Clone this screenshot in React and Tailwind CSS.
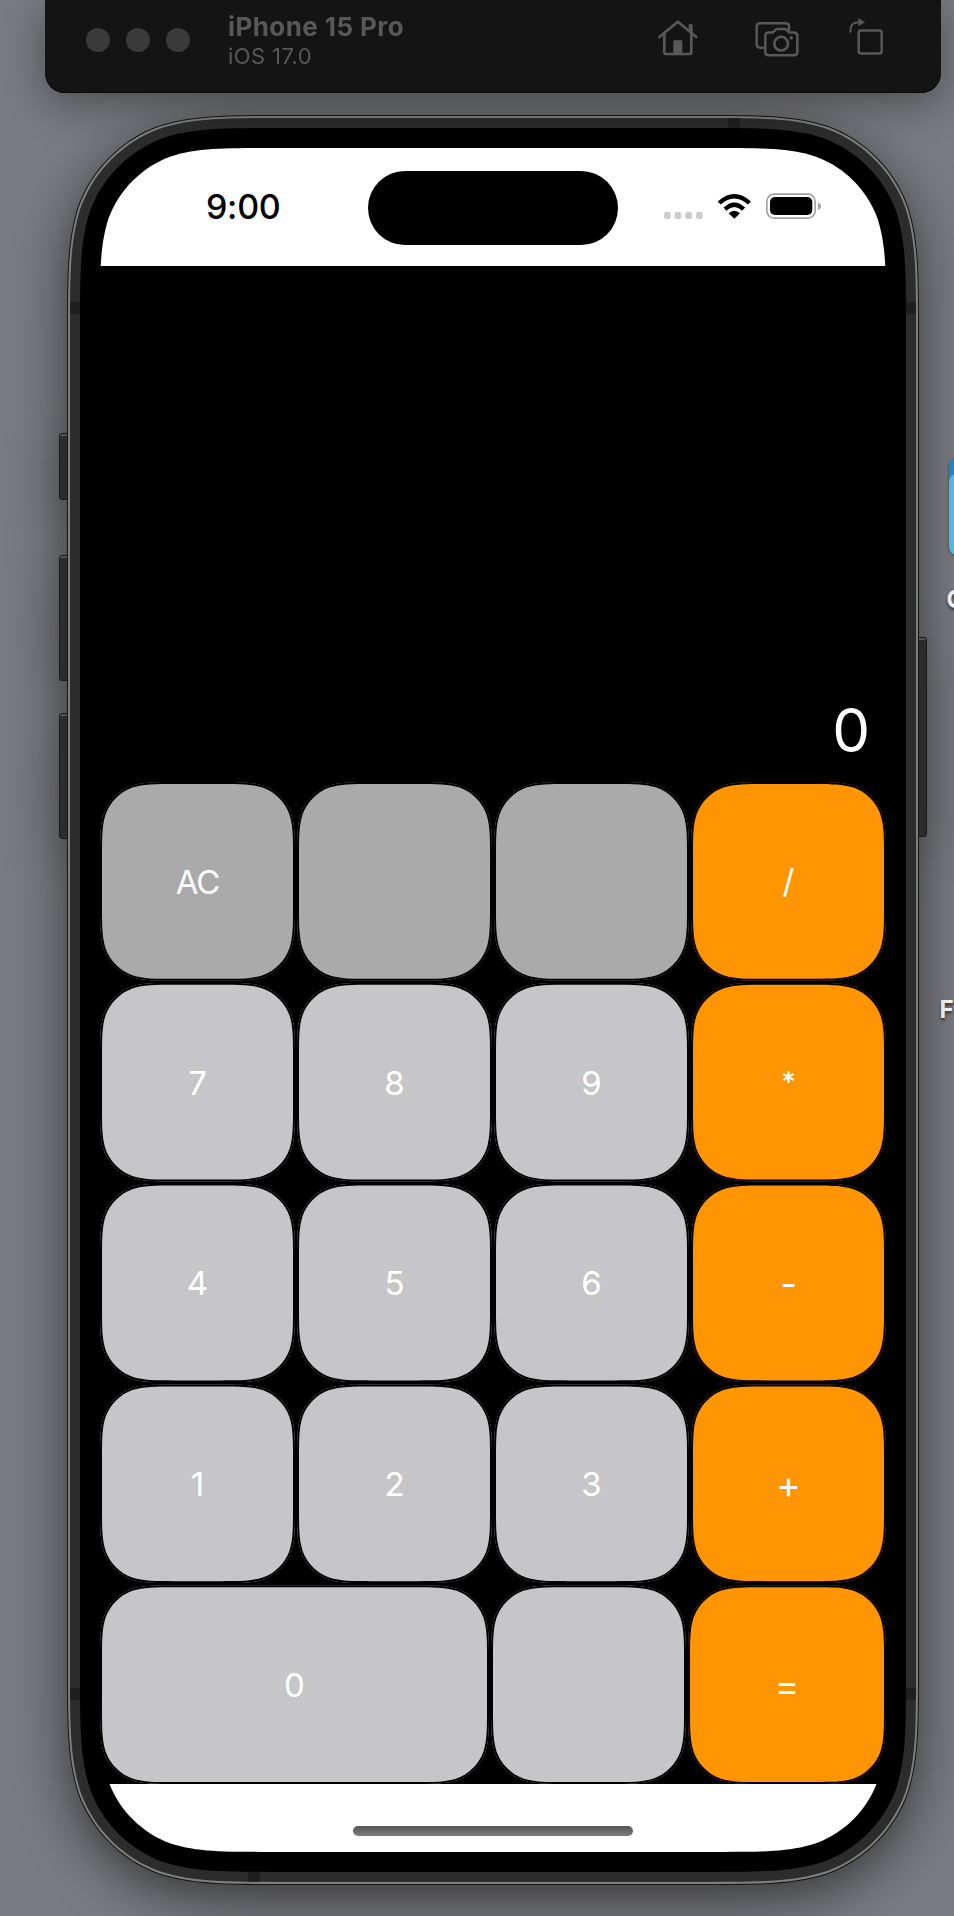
import React from "react";

// Outline of a rectangle with continuous ("smooth") corners.
function smoothRect(w, h, r, inset = 0) {
  const a = 1.52866498 * r;
  const b = 1.08849296 * r;
  const c = 0.86840694 * r;
  const d = 0.63149379 * r;
  const e = 0.07491139 * r;
  const f = 0.37282383 * r;
  const g = 0.16905956 * r;
  const L = inset;
  const T = inset;
  const R = w - inset;
  const B = h - inset;
  return [
    `M${L + a} ${T}`,
    `L${R - a} ${T}`,
    `C${R - b} ${T} ${R - c} ${T} ${R - d} ${T + e}`,
    `C${R - f} ${T + g} ${R - g} ${T + f} ${R - e} ${T + d}`,
    `C${R} ${T + c} ${R} ${T + b} ${R} ${T + a}`,
    `L${R} ${B - a}`,
    `C${R} ${B - b} ${R} ${B - c} ${R - e} ${B - d}`,
    `C${R - g} ${B - f} ${R - f} ${B - g} ${R - d} ${B - e}`,
    `C${R - c} ${B} ${R - b} ${B} ${R - a} ${B}`,
    `L${L + a} ${B}`,
    `C${L + b} ${B} ${L + c} ${B} ${L + d} ${B - e}`,
    `C${L + f} ${B - g} ${L + g} ${B - f} ${L + e} ${B - d}`,
    `C${L} ${B - c} ${L} ${B - b} ${L} ${B - a}`,
    `L${L} ${T + a}`,
    `C${L} ${T + b} ${L} ${T + c} ${L + e} ${T + d}`,
    `C${L + g} ${T + f} ${L + f} ${T + g} ${L + d} ${T + e}`,
    `C${L + c} ${T} ${L + b} ${T} ${L + a} ${T}`,
    "Z",
  ].join(" ");
}

const clip = (w, h, r, inset) => ({ clipPath: `path("${smoothRect(w, h, r, inset)}")` });

const KEY_H = 198.8;

const TONES = {
  dark: "bg-[#aaaaaa]",
  light: "bg-[#c6c6c8]",
  orange: "bg-[#ff9503]",
};

const RIMS = {
  dark: "bg-[#6c6c6c]",
  light: "bg-[#7c7c7d]",
  orange: "bg-[#8f5402]",
};

const LABEL_STYLES = {
  AC: "text-[33px] tracking-[-1.200px] pt-[2px]",
  "/": "text-[33px] pt-px",
  "*": "text-[29px] pb-[2px]",
  "-": "text-[36px] pt-[2px]",
  "+": "text-[37px] pt-px",
  "=": "text-[37px] pt-px",
};

function Key({ label, tone, width = 195 }) {
  const text = LABEL_STYLES[label] || "text-[33px] pt-[2px]";
  return (
    <button
      className={`grid h-full w-full place-items-stretch ${RIMS[tone]}`}
      style={clip(width, KEY_H, 50)}
    >
      <span className="col-start-1 row-start-1 bg-black" style={clip(width, KEY_H, 50)} />
      <span
        className={`col-start-1 row-start-1 flex items-center justify-center leading-none text-white ${TONES[tone]} ${text}`}
        style={clip(width, KEY_H, 48, 2)}
      >
        {label}
      </span>
    </button>
  );
}

const ROWS = [
  [["AC", "dark"], ["", "dark"], ["", "dark"], ["/", "orange"]],
  [["7", "light"], ["8", "light"], ["9", "light"], ["*", "orange"]],
  [["4", "light"], ["5", "light"], ["6", "light"], ["-", "orange"]],
  [["1", "light"], ["2", "light"], ["3", "light"], ["+", "orange"]],
];

function HomeIcon() {
  return (
    <svg className="h-10 w-[40px]" viewBox="53 20 120 120" fill="none" stroke="#585858" strokeWidth="8" strokeLinecap="round" strokeLinejoin="round">
      <path d="M57 80 L112.500 34 L168 80" />
      <path d="M72 70 V125 Q72 131 78 131 H147 Q153 131 153 125 V70" />
      <path d="M145 42 H157 V72 L145 62 Z" fill="#585858" stroke="none" />
      <path d="M99 92 Q99 90 101 90 H124 Q126 90 126 92 V131 H99 Z" fill="#585858" stroke="none" />
    </svg>
  );
}

function CameraIcon() {
  return (
    <svg className="h-10 w-11" viewBox="346 20 132 120" fill="none" stroke="#585858" strokeWidth="7.5" strokeLinejoin="round">
      <path d="M374 112 H361 Q351 112 351 102 V49 Q351 39 361 39 H438 Q448 39 448 49 V61" />
      <path d="M386 66.500 H397 Q401 66.500 404 62 L406 60 Q409 56 414 56 H434 Q439 56 442 60 L444 62 Q447 66.500 451 66.500 H463 Q473 66.500 473 76.500 V125 Q473 135 463 135 H387 Q377 135 377 125 V76.500 Q377 66.500 387 66.500 Z" />
      <circle cx="424.500" cy="100" r="20.500" />
      <circle cx="454.500" cy="82.500" r="5.500" fill="#585858" stroke="none" />
    </svg>
  );
}

function RotateIcon() {
  return (
    <svg className="h-10 w-[34.700px]" viewBox="628 20 104 120" fill="none" stroke="#585858" strokeWidth="7.5">
      <rect x="657" y="60.500" width="69" height="69" rx="7" />
      <path d="M632.500 67 C631 46 638 36 658 35.500" strokeWidth="6" />
      <path d="M656 22 L676 35.500 L656 48 Z" fill="#585858" stroke="none" />
    </svg>
  );
}

function Toolbar() {
  return (
    <header className="relative z-10 ml-[45px] flex h-[93px] w-[896px] shrink-0 rounded-b-[20px] bg-[#141414] pl-[41px] shadow-[inset_0_-1px_0_#0a0a0a,0_10px_40px_rgba(0,0,0,0.38)]">
      <div className="flex h-6 gap-4 pt-7">
        <span className="size-6 rounded-full bg-[#3a3a3a]" />
        <span className="size-6 rounded-full bg-[#3a3a3a]" />
        <span className="size-6 rounded-full bg-[#3a3a3a]" />
      </div>
      <div className="ml-[38px] w-[430px] pt-[12px] text-[#585858]">
        <div className="text-[26px] leading-[30px] font-bold tracking-[0.420px]">iPhone 15 Pro</div>
        <div className="text-[22px] leading-[28px] tracking-[0.400px]">iOS 17.0</div>
      </div>
      <div className="flex pt-[16.700px]">
        <HomeIcon />
        <div className="ml-[57.300px]"><CameraIcon /></div>
        <div className="ml-[50px]"><RotateIcon /></div>
      </div>
    </header>
  );
}

function StatusBar() {
  return (
    <div className="flex h-[118px] shrink-0 bg-white text-black">
      <div className="w-[268px] pt-[41px] pl-[106px] text-[34px] leading-9 font-medium tracking-[-0.300px]">
        9:00
      </div>
      <div className="mt-[22.500px] h-[74px] w-[250px] rounded-full bg-black" />
      <div className="flex pt-[42px] pl-[44px]">
        <svg className="h-[33.330px] w-[166.670px]" viewBox="66 30 500 100">
          <g fill="#cccccc">
            <rect x="72" y="96" width="20" height="21" rx="7" />
            <rect x="104" y="96" width="20" height="21" rx="7" />
            <rect x="136" y="96" width="20" height="21" rx="7" />
            <rect x="168" y="96" width="20" height="21" rx="7" />
          </g>
          <g fill="none" stroke="#000" strokeWidth="13">
            <path d="M237.500 69 Q283 28 328.500 69" />
            <path d="M255 87.500 Q283 61 311 87.500" />
          </g>
          <path d="M283 116 L266 100 Q283 85 300 100 Z" />
          <rect x="380.500" y="42.500" width="145" height="72" rx="22" fill="none" stroke="#a3a3a3" strokeWidth="5" />
          <rect x="390" y="51" width="127" height="54" rx="15" />
          <path d="M534 68 Q543 71 543 79 Q543 87 534 90 Z" fill="#a3a3a3" />
        </svg>
      </div>
    </div>
  );
}

function Screen() {
  return (
    <div className="flex h-[1704px] w-[786px] flex-col bg-black" style={clip(786, 1704, 112)}>
      <StatusBar />
      <main className="flex h-[1518px] flex-col">
        <div className="flex h-[516px] items-end justify-end pr-[16px] pb-[22px] text-[60px] leading-[60px] text-white">
          0
        </div>
        <div className="flex flex-col gap-[2px]">
          {ROWS.map((row, i) => (
            <div key={i} className="grid h-[198.800px] grid-cols-4 gap-[2px]">
              {row.map(([label, tone], j) => (
                <Key key={j} label={label} tone={tone} />
              ))}
            </div>
          ))}
          <div className="grid h-[198.800px] grid-cols-[389px_195px_198px] gap-[2px]">
            <Key label="0" tone="light" width={389} />
            <Key label="" tone="light" width={195} />
            <Key label="=" tone="orange" width={198} />
          </div>
        </div>
      </main>
      <div className="flex h-[68px] items-start justify-center bg-white pt-[42px]">
        <div className="h-[10px] w-[280px] rounded-full bg-linear-to-b from-[#555] to-[#7e7e7e]" />
      </div>
    </div>
  );
}

function SideButton({ className }) {
  return (
    <span
      className={`absolute w-[10px] border border-[#1a1a1a] bg-[#2c2c2c] shadow-[inset_0_2px_0_#555] ${className}`}
    />
  );
}

function Phone() {
  return (
    <div className="relative mt-[22px] ml-[67px] w-[852px] drop-shadow-[0_14px_26px_rgba(0,0,0,0.55)]">
      <SideButton className="top-[317.500px] -left-[8px] h-[67px] rounded-l-[3px]" />
      <SideButton className="top-[440px] -left-[8px] h-[126px] rounded-l-[3px]" />
      <SideButton className="top-[598px] -left-[8px] h-[126px] rounded-l-[3px]" />
      <SideButton className="top-[522px] -right-[8px] h-[200px] rounded-r-[3px]" />
      <div className="relative bg-[#141414] p-px" style={clip(852, 1770, 145)}>
        <div className="bg-[#7f7f7e] p-[2px]" style={clip(850, 1768, 144)}>
          <div className="relative bg-[#2c2c2c] p-[10px]" style={clip(846, 1764, 142)}>
            <span className="absolute top-0 left-[658px] h-[10px] w-3 bg-[#1f1f1f]" />
            <span className="absolute bottom-0 left-[178px] h-[10px] w-3 bg-[#1f1f1f]" />
            <span className="absolute top-[184px] left-0 h-3 w-[10px] bg-[#1f1f1f]" />
            <span className="absolute top-[184px] right-0 h-3 w-[10px] bg-[#1f1f1f]" />
            <span className="absolute top-[1570px] left-0 h-3 w-[10px] bg-[#1f1f1f]" />
            <span className="absolute top-[1570px] right-0 h-3 w-[10px] bg-[#1f1f1f]" />
            <div className="bg-black p-5" style={clip(826, 1744, 132)}>
              <Screen />
            </div>
          </div>
        </div>
      </div>
    </div>
  );
}

function DesktopItems() {
  return (
    <>
      <div className="absolute top-[458px] left-[949px] h-[97px] w-[110px] rounded-[8px] bg-[#1e8fcb] pt-4 shadow-[0_1px_3px_rgba(0,0,0,0.5)]">
        <div className="h-full rounded-[8px] bg-[#5dbfee]" />
      </div>
      <div className="absolute top-[586px] left-[946.500px] text-[24px] leading-7 font-bold text-white [text-shadow:0_2px_3px_rgba(0,0,0,0.6)]">
        C
      </div>
      <div className="absolute top-[996px] left-[939.500px] text-[24px] leading-7 font-bold text-white [text-shadow:0_2px_3px_rgba(0,0,0,0.6)]">
        F
      </div>
    </>
  );
}

export default function App() {
  return (
    <div className="relative flex h-[1916px] w-[954px] flex-col overflow-hidden bg-[#7a7b80] font-['Inter','Liberation_Sans',sans-serif]">
      <DesktopItems />
      <Toolbar />
      <Phone />
    </div>
  );
}
